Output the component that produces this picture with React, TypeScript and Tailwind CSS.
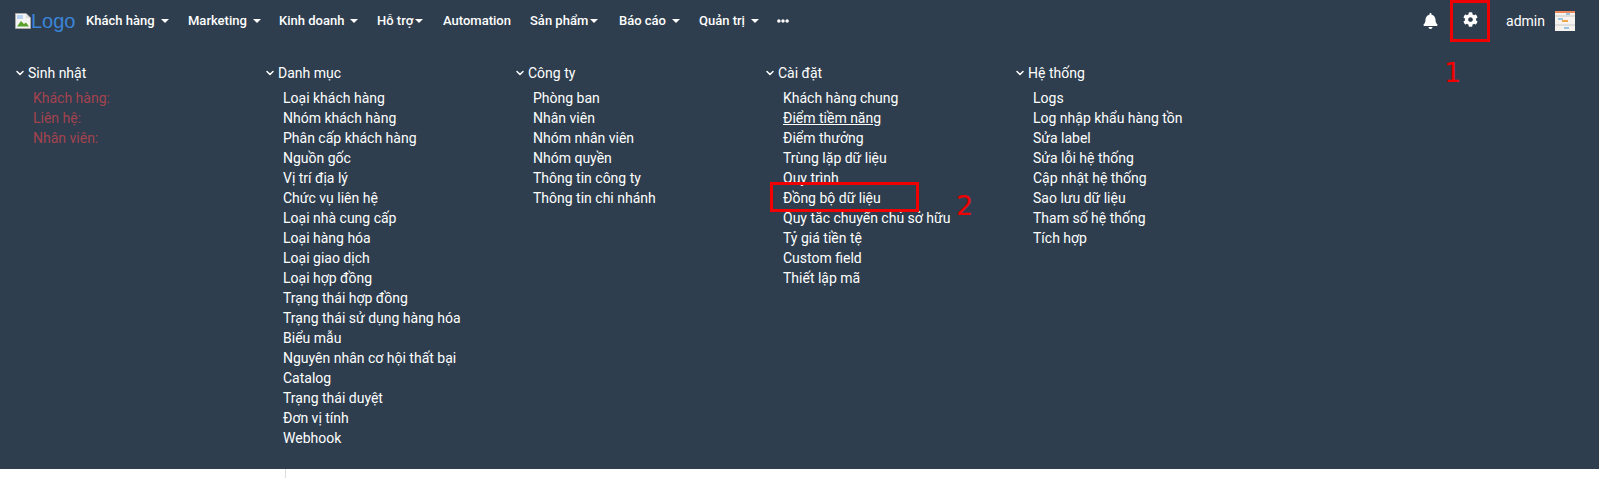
import { ChevronDown } from "lucide-react";
import { FaBell, FaCog, FaEllipsisH } from "react-icons/fa";

const NAV = [
  { label: "Khách hàng", caret: "wide", width: "w-[102px]" },
  { label: "Marketing", caret: "wide", width: "w-[91px]" },
  { label: "Kinh doanh", caret: "wide", width: "w-[98px]" },
  { label: "Hỗ trợ", caret: "tight", width: "w-[66px]" },
  { label: "Automation", caret: "none", width: "w-[87px]" },
  { label: "Sản phẩm", caret: "tight", width: "w-[89px]" },
  { label: "Báo cáo", caret: "wide", width: "w-[80px]" },
  { label: "Quản trị", caret: "wide", width: "w-[78px]" },
];

const COLUMNS = [
  {
    title: "Danh mục",
    items: [
      "Loại khách hàng", "Nhóm khách hàng", "Phân cấp khách hàng", "Nguồn gốc", "Vị trí địa lý",
      "Chức vụ liên hệ", "Loại nhà cung cấp", "Loại hàng hóa", "Loại giao dịch", "Loại hợp đồng",
      "Trạng thái hợp đồng", "Trạng thái sử dụng hàng hóa", "Biểu mẫu", "Nguyên nhân cơ hội thất bại",
      "Catalog", "Trạng thái duyệt", "Đơn vị tính", "Webhook",
    ],
  },
  {
    title: "Công ty",
    items: ["Phòng ban", "Nhân viên", "Nhóm nhân viên", "Nhóm quyền", "Thông tin công ty", "Thông tin chi nhánh"],
  },
  {
    title: "Cài đặt",
    items: [
      "Khách hàng chung", "Điểm tiềm năng", "Điểm thưởng", "Trùng lặp dữ liệu", "Quy trình", "Đồng bộ dữ liệu",
      "Quy tắc chuyển chủ sở hữu", "Tỷ giá tiền tệ", "Custom field", "Thiết lập mã",
    ],
  },
  {
    title: "Hệ thống",
    items: [
      "Logs", "Log nhập khẩu hàng tồn", "Sửa label", "Sửa lỗi hệ thống", "Cập nhật hệ thống",
      "Sao lưu dữ liệu", "Tham số hệ thống", "Tích hợp",
    ],
  },
];

function Caret() {
  return <span className="inline-block w-0 h-0 border-x-4 border-x-transparent border-t-4 border-t-white" />;
}

function Heading({ title }: { title: string }) {
  return (
    <div className="flex items-center h-5 text-white">
      <ChevronDown className="w-3 h-3 -ml-px mr-[2px]" strokeWidth={3} />
      {title}
    </div>
  );
}

export default function App() {
  return (
    <div className="w-[1599px] h-[478px] bg-white overflow-hidden text-[14px] font-['Roboto',sans-serif]">
      <div className="h-[469px] bg-[#2e3e4e]">
        {/* Top nav */}
        <div className="relative flex items-center h-[42px] pl-[15px] text-white text-[13px] font-medium">
          <div className="flex items-center w-[71px] text-[20px] font-normal text-[#3b85d8] font-['Liberation_Sans',sans-serif]">
            <svg className="w-4 h-4 shrink-0" viewBox="0 0 16 16">
              <path d="M0.5 0.5 H11 L15.5 5 V15.5 H0.5 Z" fill="#f4f4f4" stroke="#a9a9a9" />
              <path d="M11 0.5 V5 H15.5 Z" fill="#ddd" />
              <path d="M2 13.5 L6 8 L9 11 L11 9.5 L14 13.5 Z" fill="#5aa02c" />
              <rect x="2" y="2" width="6" height="4" fill="#b9d4f2" />
            </svg>
            Logo
          </div>
          {NAV.map((item) => (
            <div key={item.label} className={`flex items-center ${item.width}`}>
              {item.label}
              {item.caret === "wide" && <span className="ml-[6px] flex"><Caret /></span>}
              {item.caret === "tight" && <span className="ml-[2px] flex"><Caret /></span>}
            </div>
          ))}
          <FaEllipsisH className="w-3 h-3" />
          <div className="flex items-center ml-auto">
            <FaBell className="w-[15px] h-4 mr-[25px]" />
            <FaCog className="w-[15px] h-[15px] mr-[28px] -mt-[4px]" />
            <span className="text-[14px] font-normal">admin</span>
            <svg className="ml-[10px] mr-[24px]" width="20" height="20" viewBox="0 0 20 20">
              <rect width="20" height="20" fill="#f6f3ee" />
              <rect width="20" height="2" fill="#ec8a5e" />
              <path d="M0 5h20M0 14h20" stroke="#c9c9c9" />
              <path d="M11 3h4M3 8h5M9 17h5" stroke="#7db5dc" strokeWidth="1.5" />
              <path d="M7 10h6" stroke="#f0a84e" strokeWidth="2" />
            </svg>
          </div>
          {/* Annotation box around the settings icon */}
          <div className="absolute left-[1450px] top-0 w-10 h-[42px] border-[3px] border-[#f00000]" />
        </div>

        {/* Mega menu */}
        <div className="relative flex pl-[15px] pt-[21px] leading-5">
          <div className="w-[250px]">
            <Heading title="Sinh nhật" />
            <div className="pl-[18px] mt-[5px] text-[#a4434f]">
              <div>Khách hàng:</div>
              <div>Liên hệ:</div>
              <div>Nhân viên:</div>
            </div>
          </div>
          {COLUMNS.map((col) => (
            <div key={col.title} className="w-[250px]">
              <Heading title={col.title} />
              <div className="pl-[18px] mt-[5px] text-white">
                {col.items.map((name) => (
                  <div key={name} className={name === "Điểm tiềm năng" ? "underline" : ""}>
                    {name}
                  </div>
                ))}
              </div>
            </div>
          ))}
          {/* Annotations */}
          <div className="absolute left-[770px] top-[140px] w-[149px] h-[30px] border-[3px] border-[#f00000]" />
          <span className="absolute left-[956px] top-[148px] text-[27px] leading-8 text-[#f00000] font-['DejaVu_Sans',sans-serif]">2</span>
          <span className="absolute left-[1444px] top-[15px] text-[27px] leading-8 text-[#f00000] font-['DejaVu_Sans',sans-serif]">1</span>
        </div>
      </div>
      <div className="ml-[285px] w-px h-[9px] bg-[#dddddd]" />
    </div>
  );
}
